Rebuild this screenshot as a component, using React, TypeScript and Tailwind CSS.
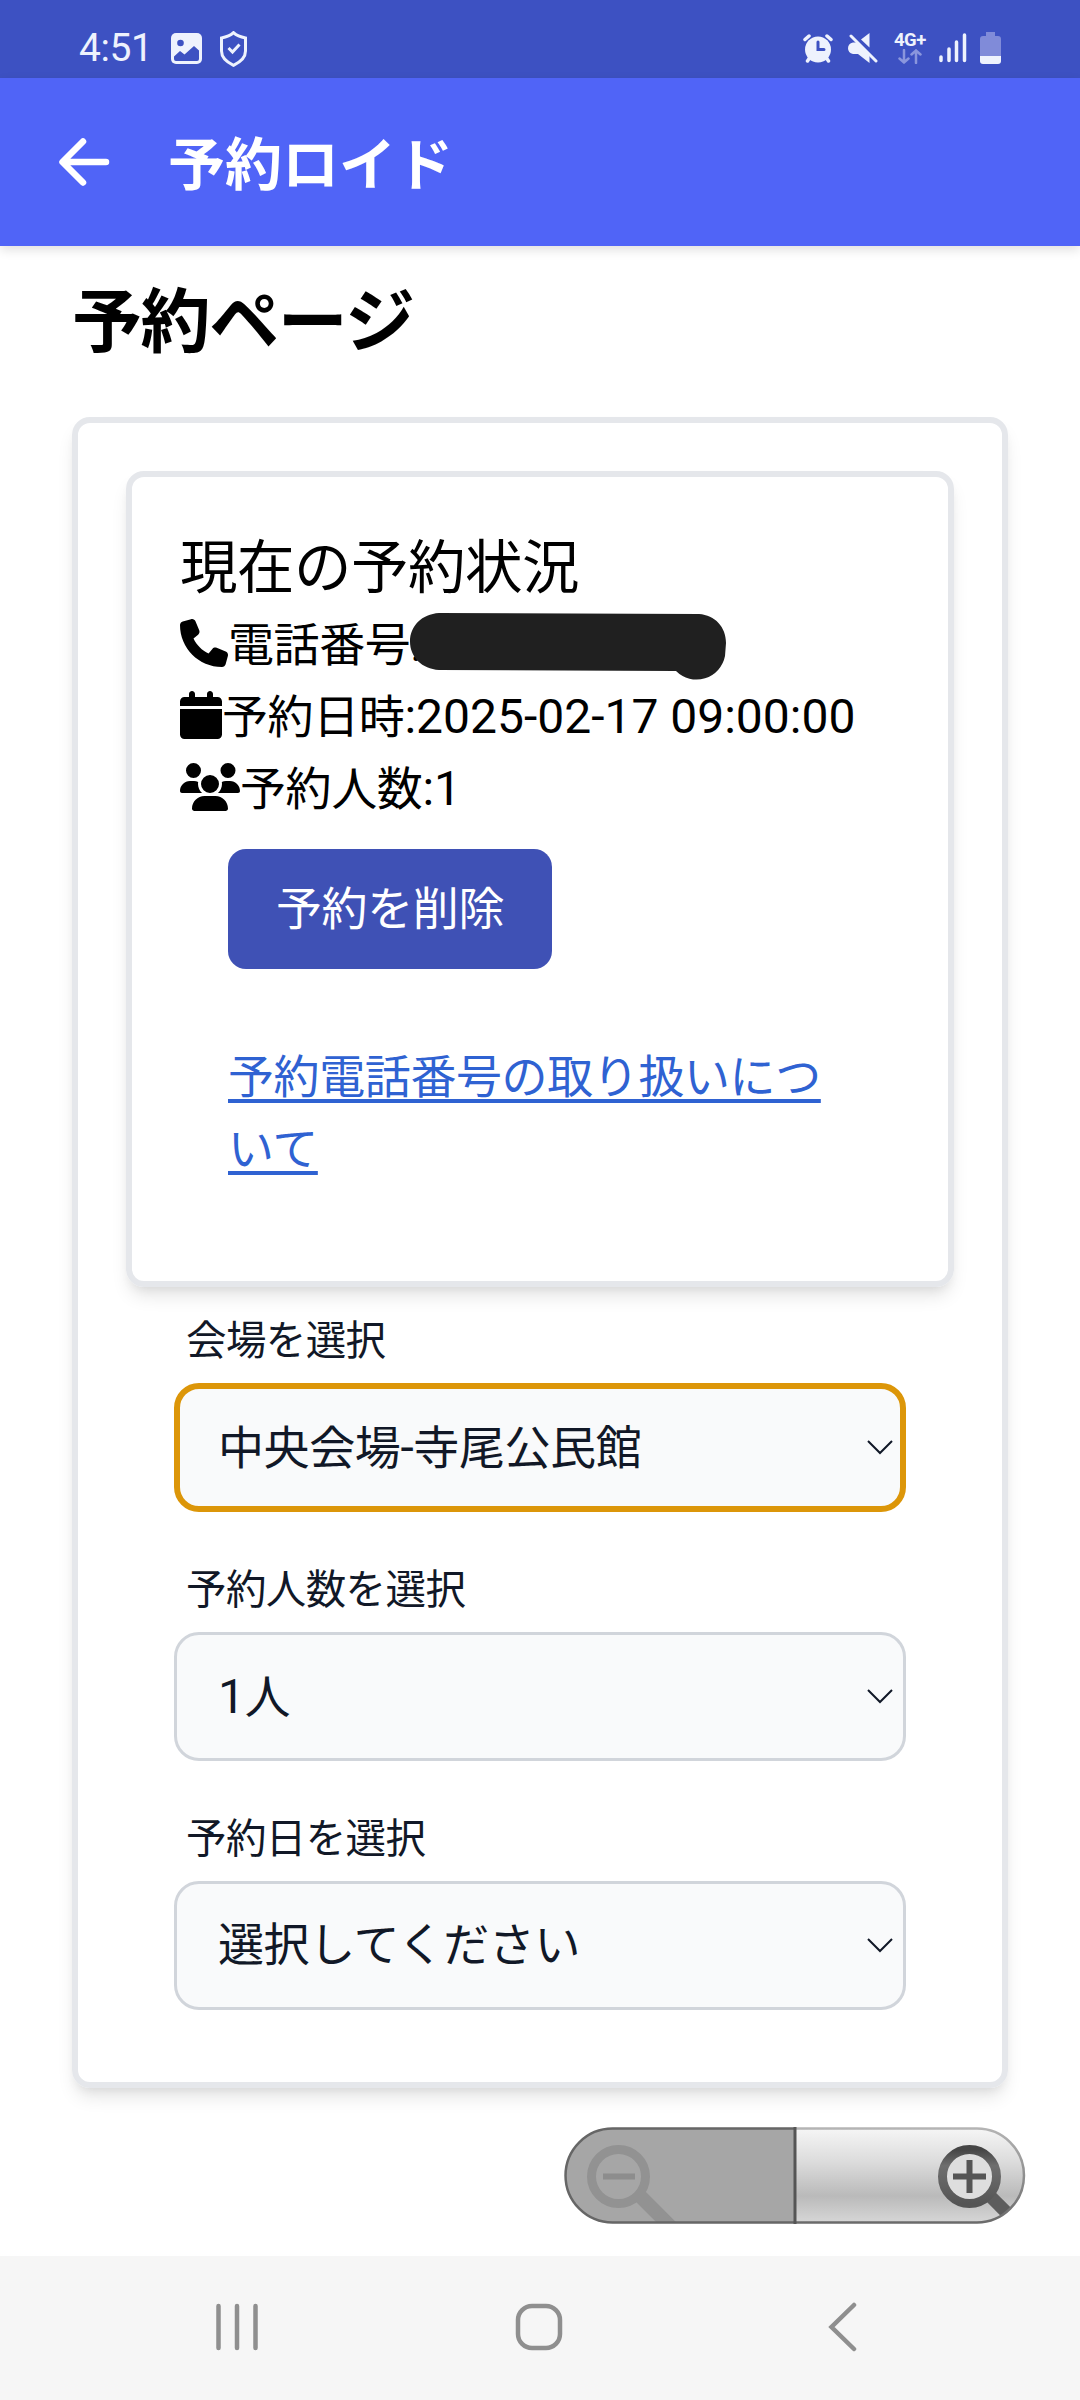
import type { ReactNode } from "react";
import { FaCalendar, FaPhone, FaUsers } from "react-icons/fa6";

type SelectFieldProps = {
  label: string;
  focused?: boolean;
  children: ReactNode;
};

function StatusBar() {
  return (
    <div className="flex h-[78px] items-start justify-between bg-[#3d51c2] pr-[79px] pl-[79px] text-[#eef2fd]">
      <div className="flex items-start">
        <span className="mt-[25px] w-[92px] text-[39px] leading-[46px] tracking-[-0.4px]">4:51</span>
        <svg className="mt-[33px]" width="31" height="31" viewBox="0 0 31 31">
          <rect width="31" height="31" rx="5" fill="currentColor" />
          <circle cx="9.5" cy="10" r="3.3" fill="#3d51c2" />
          <path d="M3 23.500L9 18l4.500 3.500L23 13l5 4.500V26q0 2-2 2H5q-2 0-2-2z" fill="#3d51c2" />
        </svg>
        <svg className="mt-[31px] ml-[18px]" width="27" height="36" viewBox="0 0 27 36" fill="none" stroke="currentColor" strokeWidth="3">
          <path d="M13.500 1.700C17 5 21 6.200 25.500 7v13c0 6.500-5 11-12 14.300C6.500 31 1.500 26.500 1.500 20V7C6 6.200 10 5 13.500 1.700z" />
          <path d="M8.500 17l4 4 7-7.500" />
        </svg>
      </div>
      <div className="flex items-start">
        <svg className="mt-[33px]" width="30" height="30" viewBox="0 0 30 30">
          <circle cx="15" cy="16.500" r="13" fill="currentColor" />
          <path d="M2 6.500L6 3M28 6.500L24 3M4.500 28l2-3M25.500 28l-2-3" stroke="currentColor" strokeWidth="3.500" strokeLinecap="round" />
          <path d="M15 9v7.500h6" fill="none" stroke="#3d51c2" strokeWidth="3" strokeLinecap="round" />
        </svg>
        <svg className="mt-[33px] ml-[15px]" width="30" height="31" viewBox="0 0 30 31" fill="currentColor">
          <path d="M5 9.500h4L21.500 22v8L10 21H5q-5-1-5-5.700T5 9.500zM21.500 0v14.500L13 6.500z" />
          <path d="M3 3l25 25" stroke="currentColor" strokeWidth="3" strokeLinecap="round" />
        </svg>
        <div className="mt-[31px] ml-[16px] w-[33px]">
          <div className="text-[18.500px] leading-[18px] font-bold tracking-[-0.5px]">4G+</div>
          <svg width="24" height="15" viewBox="0 0 24 15" className="ml-1" fill="none" stroke="#8a96dd" strokeWidth="2.500" strokeLinecap="round">
            <path d="M6 1v12.500M1.500 9.500L6 13.500l4.500-4M18 14V1.500M13.500 5.500L18 1.500l4.500 4" />
          </svg>
        </div>
        <svg className="mt-[33px] ml-[12px]" width="28" height="30" viewBox="0 0 28 30" stroke="currentColor" strokeWidth="3.500" strokeLinecap="round">
          <path d="M2 24v3.500M10 16v11.500M17.500 9v18.500M25.500 2v25.500" />
        </svg>
        <svg className="mt-[32px] ml-[13px]" width="21" height="32" viewBox="0 0 21 32">
          <path d="M6 0h9v4h3q3 0 3 3v17H0V7q0-3 3-3h3z" fill="#808bd9" />
          <path d="M0 24h21v5q0 3-3 3H3q-3 0-3-3z" fill="currentColor" />
        </svg>
      </div>
    </div>
  );
}

function SelectField({ label, focused, children }: SelectFieldProps) {
  return (
    <div>
      <div className="mb-3 pl-3 text-[40.500px] leading-[60px] tracking-[-0.6px] text-[#111827]">{label}</div>
      <div
        className={`flex h-[129px] items-center justify-between rounded-[25px] bg-[#f9fafb] text-[46px] tracking-[-0.4px] text-[#111827] ${
          focused ? "border-6 border-[#dc9609] pr-[7px] pl-[38px]" : "border-3 border-[#d1d5db] pr-[10px] pl-[41px]"
        }`}
      >
        <span>{children}</span>
        <svg width="26" height="16" viewBox="0 0 26 16" fill="none" stroke="#111827" strokeWidth="2">
          <path d="M1 1l12 12 12-12" />
        </svg>
      </div>
    </div>
  );
}

function ZoomControl() {
  return (
    <svg className="mt-[39px] ml-[564px]" width="462" height="98" viewBox="0 0 462 98">
      <defs>
        <linearGradient id="plate" x1="0" y1="0" x2="0" y2="1">
          <stop offset="0" stopColor="#f5f5f5" />
          <stop offset="0.35" stopColor="#dcdcdc" />
          <stop offset="0.72" stopColor="#bababa" />
          <stop offset="1" stopColor="#d6d6d6" />
        </linearGradient>
        <linearGradient id="edge" gradientUnits="userSpaceOnUse" x1="0" y1="0" x2="0" y2="96">
          <stop offset="0" stopColor="#b5b5b5" />
          <stop offset="1" stopColor="#6a6a6a" />
        </linearGradient>
        <linearGradient id="lens" x1="0" y1="0" x2="0" y2="1">
          <stop offset="0" stopColor="#454545" />
          <stop offset="0.3" stopColor="#6e6e6e" />
          <stop offset="1" stopColor="#555" />
        </linearGradient>
        <clipPath id="pill">
          <rect x="2" y="2" width="458" height="93" rx="46.500" />
        </clipPath>
      </defs>
      <rect x="2" y="2" width="458" height="93" rx="46.500" fill="url(#plate)" />
      <path d="M231 1.500H48.500a47 47 0 0 0 0 94H231z" fill="#a6a6a6" />
      <g clipPath="url(#pill)">
        <path d="M73 66l38 38" stroke="#929292" strokeWidth="14" />
        <path d="M423 66l38 38" stroke="#5d5d5d" strokeWidth="13" />
      </g>
      <circle cx="54.500" cy="49.500" r="27" fill="none" stroke="#929292" strokeWidth="9" />
      <path d="M39 49.500h32" stroke="#8d8d8d" strokeWidth="6" />
      <circle cx="405.500" cy="49.500" r="23" fill="#dedede" />
      <circle cx="405.500" cy="49.500" r="27" fill="none" stroke="url(#lens)" strokeWidth="9" />
      <path d="M405.500 33v33M389 49.500h33" stroke="#555" strokeWidth="6" />
      <path d="M231 1.500H413a47 47 0 0 1 0 94H231" fill="none" stroke="url(#edge)" strokeWidth="2.500" />
      <path d="M231 1.500H48.500a47 47 0 0 0 0 94H231" fill="none" stroke="#666" strokeWidth="2.500" />
      <path d="M231 0v97" stroke="#555" strokeWidth="3" />
    </svg>
  );
}

function NavigationBar() {
  return (
    <div className="flex h-[144px] items-start bg-[#f6f6f6] pt-[46px] pl-[215px]">
      <svg width="44" height="50" viewBox="0 0 44 50" stroke="#8f8f8f" strokeWidth="4.500" strokeLinecap="round">
        <path d="M3.500 4v42M22 4v42M40.500 4v42" />
      </svg>
      <svg className="ml-[255px]" width="50" height="50" viewBox="0 0 50 50">
        <rect x="4" y="4" width="42" height="42" rx="14" fill="none" stroke="#8f8f8f" strokeWidth="4.500" />
      </svg>
      <svg className="ml-[263px]" width="32" height="50" viewBox="0 0 32 50" fill="none" stroke="#8f8f8f" strokeWidth="4.500" strokeLinecap="round">
        <path d="M27 3L4.500 25 27 47" />
      </svg>
    </div>
  );
}

export default function App() {
  return (
    <div className="flex h-[2400px] w-[1080px] flex-col overflow-hidden bg-white font-['Roboto','Noto_Sans_CJK_JP',sans-serif] text-black">
      <StatusBar />
      <header className="flex h-[168px] shrink-0 items-center bg-[#5064f7] pl-[58px] text-white shadow-[0_4px_10px_rgba(0,0,0,0.12)]">
        <svg width="52" height="50" viewBox="0 0 52 50" fill="none" stroke="currentColor" strokeWidth="6.500" strokeLinecap="round" strokeLinejoin="round">
          <path d="M25 4.500L4.500 25 25 45.500M5 25h43" />
        </svg>
        <h1 className="ml-[58px] pt-[7px] text-[57px] leading-none font-bold">予約ロイド</h1>
      </header>

      <main className="flex-1">
        <h2 className="ml-[72px] pt-7 text-[70px] leading-[99px] font-bold tracking-[-1.4px]">予約ページ</h2>
        <section className="mx-[72px] mt-11 h-[1671px] rounded-[18px] border-6 border-[#e5e7eb] p-12 shadow-[0_12px_18px_-3px_rgba(0,0,0,0.1),0_6px_12px_-6px_rgba(0,0,0,0.1)]">
          <div className="h-[816px] rounded-[18px] border-6 border-[#e5e7eb] p-12 shadow-[0_12px_18px_-3px_rgba(0,0,0,0.1),0_6px_12px_-6px_rgba(0,0,0,0.1)]">
            <h3 className="h-[84px] pt-[2px] text-[57.500px] leading-[84px] tracking-[-0.5px]">現在の予約状況</h3>
            <div className="text-[46px] leading-[72px] tracking-[-0.4px]">
              <div className="relative flex h-[72px]">
                <FaPhone className="mt-[10px] size-12" />
                <span>電話番号:</span>
                {/* Masked number */}
                <svg className="absolute top-[3px] left-[229px]" width="320" height="72" viewBox="0 0 320 72" fill="#202020">
                  <path d="M30 1L290 2C306 3 317 15 317 31L316 44A29 29 0 0 1 267 59L30 58C13 57 1 45 1 29.500S13 2 30 1z" />
                </svg>
              </div>
              <div className="flex h-[72px]">
                <FaCalendar className="mt-[10px] h-12 w-[42px]" />
                <span>予約日時<span className="text-[48px] tracking-normal">:2025-02-17 09:00:00</span></span>
              </div>
              <div className="flex h-[72px]">
                <FaUsers className="mt-[10px] h-12 w-[60px]" />
                <span>予約人数<span className="text-[48px] tracking-normal">:1</span></span>
              </div>
              <button type="button" className="mx-12 mt-6 block h-[120px] w-[324px] rounded-[18px] bg-[#3f51b5] text-center text-white">
                予約を削除
              </button>
              <p className="mx-12 mt-[72px]">
                <a className="text-[#2f62d2] underline decoration-[4px] underline-offset-[6px]">
                  予約電話番号の取り扱いについて
                </a>
              </p>
            </div>
          </div>
          <div className="mx-12 mt-[24px] flex flex-col gap-12">
            <SelectField label="会場を選択" focused>中央会場<span className="text-[48px]">-</span>寺尾公民館</SelectField>
            <SelectField label="予約人数を選択"><span className="text-[48px]">1</span>人</SelectField>
            <SelectField label="予約日を選択">選択してください</SelectField>
          </div>
        </section>
        <ZoomControl />
      </main>

      <NavigationBar />
    </div>
  );
}
